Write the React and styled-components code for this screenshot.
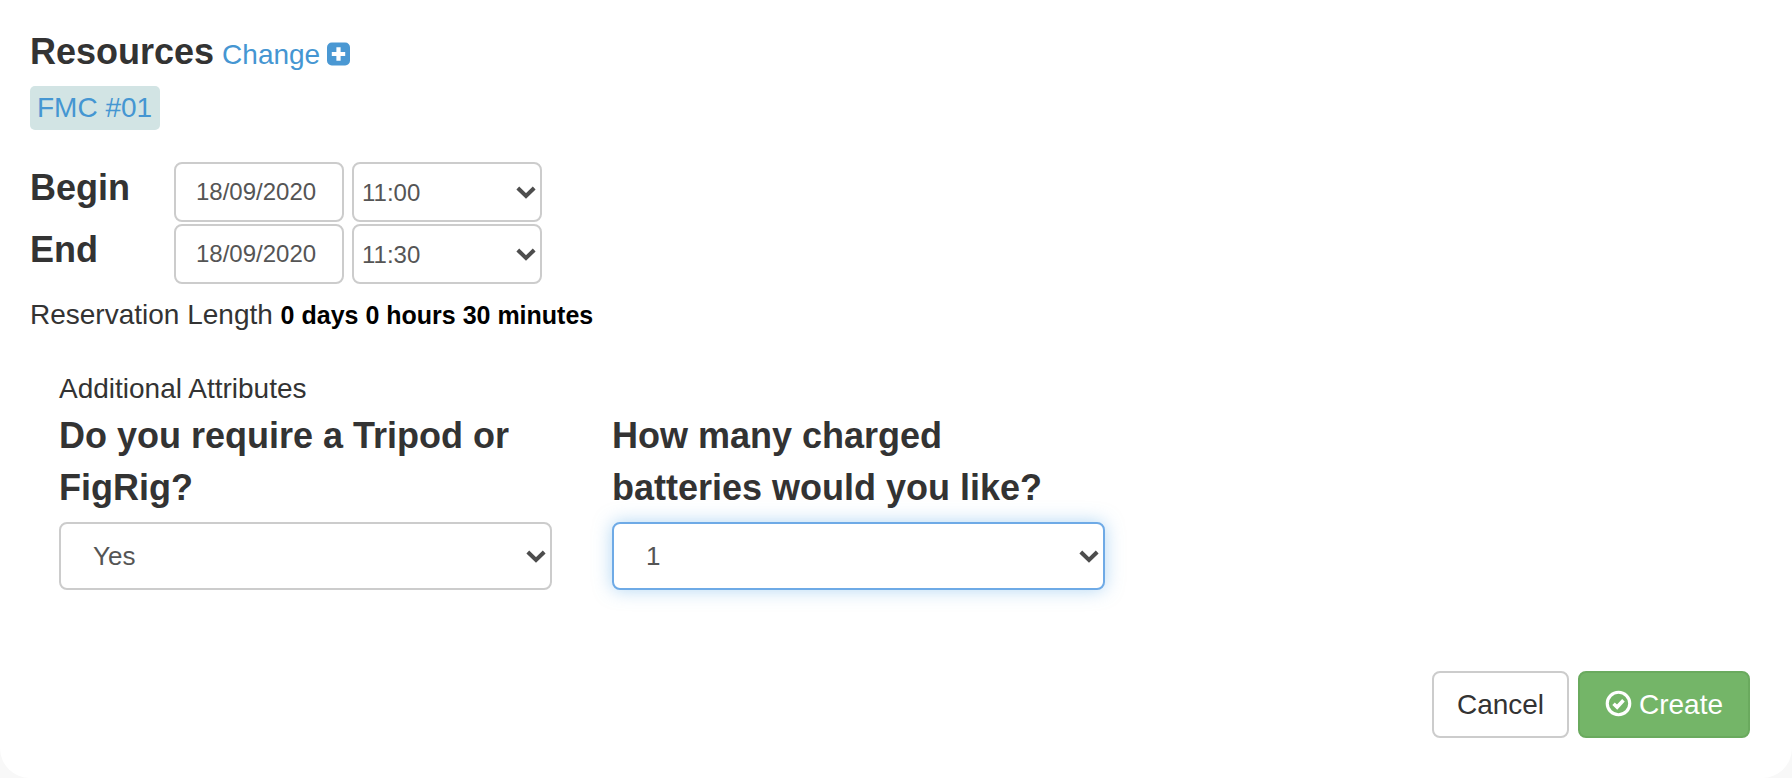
import React from "react";
import styled, { createGlobalStyle } from "styled-components";

const Global = createGlobalStyle`
  html, body {
    margin: 0;
    height: 100%;
    background: #f8f8f8;
  }
  #root {
    height: 100%;
  }
  * {
    box-sizing: border-box;
  }
`;

function Chevron() {
  return (
    <Arrow viewBox="0 0 20 14" aria-hidden="true">
      <path d="M1.8 3 L10 11 L18.2 3" fill="none" stroke="#4d4d4d" strokeWidth="4" />
    </Arrow>
  );
}

function PlusSquare() {
  return (
    <PlusIcon viewBox="0 0 24 24" aria-hidden="true">
      <rect width="24" height="24" rx="5" fill="#4a98d3" />
      <path d="M12 5 V19 M5 12 H19" stroke="#fff" strokeWidth="4.4" />
    </PlusIcon>
  );
}

function CheckCircle() {
  return (
    <CheckIcon viewBox="0 0 24 24" aria-hidden="true">
      <circle cx="12" cy="12" r="10" fill="none" stroke="#fff" strokeWidth="2.8" />
      <path d="M7.6 12.2 L10.8 15.2 L16.4 9.2" fill="none" stroke="#fff" strokeWidth="3.2" />
    </CheckIcon>
  );
}

function Dropdown({ value, small, focused, options }) {
  return (
    <SelectWrap $small={small}>
      <Select $small={small} $focused={focused} defaultValue={value}>
        {options.map((o) => (
          <option key={o}>{o}</option>
        ))}
      </Select>
      <Chevron />
    </SelectWrap>
  );
}

export default function App() {
  return (
    <>
      <Global />
      <Modal>
        <Body>
          <ResourceTitle>
            <Heading>Resources</Heading>
            <ChangeLink href="#">Change</ChangeLink>
            <PlusSquare />
          </ResourceTitle>
          <Tag>FMC #01</Tag>

          <TimeGrid>
            <TimeLabel>Begin</TimeLabel>
            <DateInput defaultValue="18/09/2020" />
            <Dropdown small value="11:00" options={["11:00", "11:30"]} />
            <TimeLabel>End</TimeLabel>
            <DateInput defaultValue="18/09/2020" />
            <Dropdown small value="11:30" options={["11:00", "11:30"]} />
          </TimeGrid>

          <Length>
            Reservation Length <strong>0 days 0 hours 30 minutes</strong>
          </Length>

          <Attributes>
            <AttrTitle>Additional Attributes</AttrTitle>
            <AttrRow>
              <AttrField>
                <Question>Do you require a Tripod or FigRig?</Question>
                <Dropdown value="Yes" options={["Yes", "No"]} />
              </AttrField>
              <AttrField>
                <Question>How many charged batteries would you like?</Question>
                <Dropdown focused value="1" options={["1", "2", "3"]} />
              </AttrField>
            </AttrRow>
          </Attributes>
        </Body>

        <Footer>
          <CancelButton>Cancel</CancelButton>
          <CreateButton>
            <CheckCircle />
            Create
          </CreateButton>
        </Footer>
      </Modal>
    </>
  );
}

const Modal = styled.div`
  height: 100%;
  background: #fff;
  border-radius: 0 0 30px 30px;
  font-family: "Liberation Sans", Arial, sans-serif;
  color: #333;
  display: flex;
  flex-direction: column;
  justify-content: space-between;
`;

const Body = styled.div`
  padding: 31px 30px 0;
`;

const ResourceTitle = styled.div`
  display: flex;
  align-items: center;
  height: 42px;
`;

const Heading = styled.span`
  font-size: 36px;
  font-weight: 700;
  margin-right: 8px;
`;

const ChangeLink = styled.a`
  font-size: 28px;
  color: #4596d2;
  text-decoration: none;
  margin-right: 7px;
  position: relative;
  top: 3px;
`;

const PlusIcon = styled.svg`
  width: 23px;
  height: 24px;
  position: relative;
  top: 2px;
`;

const Tag = styled.div`
  width: 130px;
  height: 44px;
  margin-top: 13px;
  padding-left: 7px;
  display: flex;
  align-items: center;
  font-size: 28px;
  color: #4596d2;
  background: #d2e4e4;
  border-radius: 5px;
`;

const TimeGrid = styled.div`
  display: grid;
  grid-template-columns: 136px 170px 190px;
  column-gap: 8px;
  row-gap: 2px;
  margin-top: 32px;
`;

const TimeLabel = styled.div`
  font-size: 36px;
  font-weight: 700;
  line-height: 52px;
  margin-right: -8px;
`;

const DateInput = styled.input`
  width: 170px;
  height: 60px;
  padding: 0 0 0 20px;
  border: 2px solid #ccc;
  border-radius: 8px;
  font-family: inherit;
  font-size: 24px;
  color: #555;
  background: #fff;
  outline: none;
`;

const SelectWrap = styled.div`
  position: relative;
  height: ${(p) => (p.$small ? "60px" : "68px")};
`;

const Select = styled.select`
  appearance: none;
  width: 100%;
  height: 100%;
  padding: ${(p) => (p.$small ? "0 0 0 8px" : "0 0 0 32px")};
  border: 2px solid ${(p) => (p.$focused ? "#6eaae6" : "#ccc")};
  border-radius: 8px;
  font-family: inherit;
  font-size: ${(p) => (p.$small ? "24px" : "26px")};
  color: #555;
  background: #fff;
  outline: none;
  box-shadow: ${(p) =>
    p.$focused ? "0 0 18px rgba(102, 175, 233, 0.5)" : "none"};
`;

const Arrow = styled.svg`
  position: absolute;
  right: 6px;
  top: 50%;
  width: 20px;
  height: 14px;
  margin-top: -7px;
  pointer-events: none;
`;

const Length = styled.div`
  margin-top: 15px;
  font-size: 28px;
  line-height: 32px;

  strong {
    font-size: 25px;
    color: #000;
  }
`;

const Attributes = styled.div`
  margin-top: 42px;
  padding-left: 29px;
`;

const AttrTitle = styled.div`
  font-size: 28px;
  line-height: 32px;
  margin-bottom: 5px;
`;

const AttrRow = styled.div`
  display: flex;
  gap: 60px;
`;

const AttrField = styled.div`
  width: 493px;
`;

const Question = styled.div`
  font-size: 36px;
  font-weight: 700;
  line-height: 52px;
  margin-bottom: 8px;
  padding-right: 6px;
`;

const Footer = styled.div`
  display: flex;
  justify-content: flex-end;
  gap: 9px;
  padding: 0 42px 40px 0;
`;

const CancelButton = styled.button`
  width: 137px;
  height: 67px;
  border: 2px solid #ccc;
  border-radius: 8px;
  background: #fff;
  font-family: inherit;
  font-size: 28px;
  color: #333;
`;

const CreateButton = styled.button`
  width: 172px;
  height: 67px;
  display: flex;
  align-items: center;
  justify-content: center;
  gap: 7px;
  border: 2px solid #6aaa5e;
  border-radius: 8px;
  background: #74b568;
  font-family: inherit;
  font-size: 28px;
  color: #fff;
`;

const CheckIcon = styled.svg`
  width: 27px;
  height: 27px;
  position: relative;
  top: -1px;
`;
